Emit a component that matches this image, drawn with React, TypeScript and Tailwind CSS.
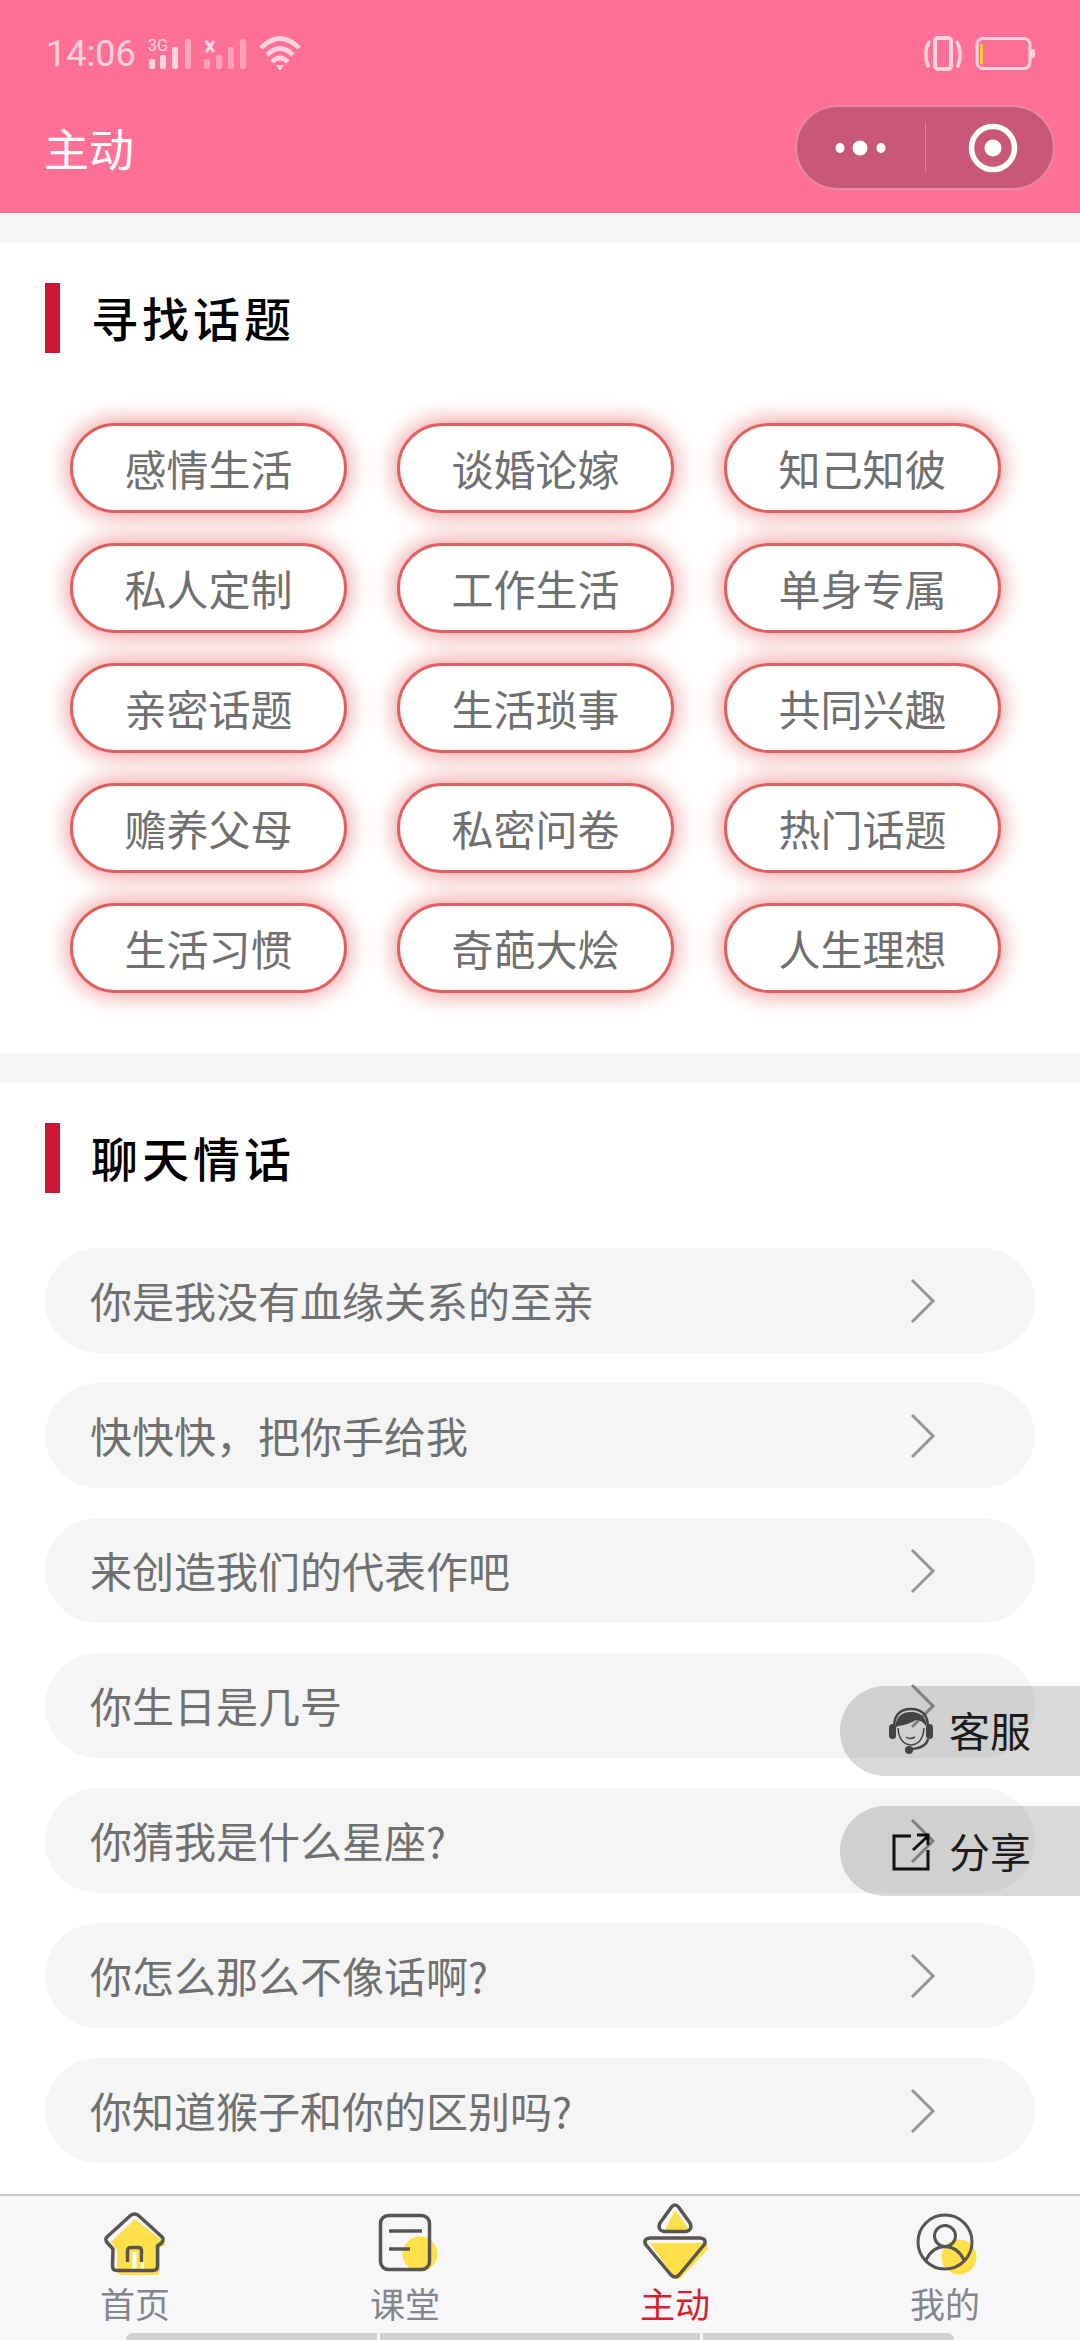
import React from "react";

const topics = ["感情生活","谈婚论嫁","知己知彼","私人定制","工作生活","单身专属","亲密话题","生活琐事","共同兴趣","赡养父母","私密问卷","热门话题","生活习惯","奇葩大烩","人生理想"];
const chats = ["你是我没有血缘关系的至亲","快快快，把你手给我","来创造我们的代表作吧","你生日是几号","你猜我是什么星座?","你怎么那么不像话啊?","你知道猴子和你的区别吗?"];
const ink = "#5a5550";
const yellow = "#ffdf4a";

function StatusLeft() {
  return (
    <svg width="160" height="40" viewBox="146 33 160 40" className="ml-[10px]">
      <text x="148" y="51" fontSize="17" fill="#ffffff" fillOpacity="0.7" fontFamily="Roboto, sans-serif" textLength="20" lengthAdjust="spacingAndGlyphs">3G</text>
      <g fill="#fff" fillOpacity="0.7">
        <rect x="149" y="59" width="6" height="10" rx="2" />
        <rect x="160" y="55" width="6" height="14" rx="2" />
        <rect x="172" y="47" width="6" height="22" rx="2" />
      </g>
      <g fill="#fff" fillOpacity="0.35">
        <rect x="185" y="39" width="6" height="30" rx="2" />
        <rect x="204" y="59" width="6" height="10" rx="2" />
        <rect x="216" y="55" width="6" height="14" rx="2" />
        <rect x="228" y="47" width="6" height="22" rx="2" />
        <rect x="240" y="39" width="6" height="30" rx="2" />
      </g>
      <path d="M206 41 L214 52 M214 41 L206 52" stroke="#fff" strokeOpacity="0.75" strokeWidth="3" />
      <g fill="none" stroke="#fff" strokeOpacity="0.7" strokeWidth="4.5">
        <path d="M261 48 Q280 29 299 48" />
        <path d="M267 55 Q280 42 293 55" />
        <path d="M272 62 Q280 54 288 62" />
      </g>
      <path d="M276 65 L284 65 L280 71 Z" fill="#fff" fillOpacity="0.7" />
    </svg>
  );
}

function StatusRight() {
  return (
    <svg width="120" height="40" viewBox="920 34 120 40" className="mr-[40px]">
      <g fill="none" stroke="#fff" strokeOpacity="0.7" strokeLinecap="round">
        <rect x="935" y="39" width="16" height="31" rx="3" strokeWidth="4" />
        <path d="M929 43 Q923 54 928 67 M957 43 Q963 54 958 67" strokeWidth="3.5" />
        <rect x="977" y="39.5" width="53" height="30" rx="6" strokeWidth="3" />
      </g>
      <rect x="1031" y="50" width="4" height="9" rx="2" fill="#fff" fillOpacity="0.7" />
      <rect x="980" y="45" width="3" height="20" fill="#ffc83d" />
    </svg>
  );
}

function Capsule() {
  return (
    <div className="flex h-[85px] w-[260px] items-center rounded-full border-2 border-[#e58ba4] bg-[#c95878]">
      <svg width="128" height="30" viewBox="0 0 128 30">
        <ellipse cx="43" cy="15" rx="4.5" ry="5" fill="#fff" />
        <ellipse cx="63" cy="15" rx="7.5" ry="7.5" fill="#fff" />
        <ellipse cx="84" cy="15" rx="4.5" ry="5" fill="#fff" />
      </svg>
      <div className="h-[51px] w-px bg-[#e07f9b]" />
      <div className="flex flex-1 items-center justify-center">
        <svg width="52" height="52" viewBox="0 0 52 52" className="ml-[6px]">
          <circle cx="26" cy="26" r="21.5" fill="none" stroke="#fff" strokeWidth="5.5" />
          <circle cx="26" cy="26" r="8.5" fill="#fff" />
        </svg>
      </div>
    </div>
  );
}

function SectionTitle({ text }: { text: string }) {
  return (
    <div className="flex h-[70px] items-center pl-[45px]">
      <div className="h-[70px] w-[15px] bg-[#cb1736]" />
      <div className="ml-[31px] pb-[2px] text-[47px] font-medium leading-[68px] tracking-[4px] text-black">{text}</div>
    </div>
  );
}

function Chevron() {
  return (
    <svg width="28" height="46" viewBox="0 0 28 46" fill="none">
      <path d="M3 2 L24 23 L3 44" stroke="#969696" strokeWidth="3" />
    </svg>
  );
}

function HomeIcon() {
  return (
    <svg width="80" height="80" viewBox="0 0 80 80" fill="none">
      <g transform="translate(0 10)">
        <path d="M40 9 L70 33 Q72 36 65 37 L65 60 Q65 65 60 65 L27 65 Q22 65 22 60 L22 40 L16 32 Z" fill={yellow} />
        <path d="M37.5 52 L37.5 42 L41.5 42 L41.5 60 L37.5 60 Z M46 44 L49 44 L49 60 L46 60 Z" fill="#fff" />
        <path d="M18 39 L12.5 33 Q9 29 13 26 L35.5 5.5 Q39.5 2.5 43.5 5.5 L66 26 Q70 29 66.5 33 L62.5 36 L62.5 56 Q62.5 60.5 58 60.5 L22 60.5 Q17.5 60.5 17.5 56 Z" stroke={ink} strokeWidth="3.5" strokeLinejoin="round" />
        <path d="M32.5 52 L32.5 41 Q32.5 37.5 36 37.5 L43 37.5 Q46.5 37.5 46.5 41 L46.5 52" stroke={ink} strokeWidth="3.5" />
      </g>
    </svg>
  );
}

function ClassIcon() {
  return (
    <svg width="80" height="80" viewBox="0 0 80 80" fill="none">
      <circle cx="55" cy="54" r="17.5" fill={yellow} />
      <rect x="15.5" y="15.5" width="49" height="54" rx="8" stroke={ink} strokeWidth="3.5" />
      <path d="M24 31 L57 31 M24 49 L45 49" stroke={ink} strokeWidth="3.5" />
    </svg>
  );
}

function ActiveIcon() {
  return (
    <svg width="80" height="80" viewBox="0 0 80 80" fill="none">
      <path d="M40 10 L54 29 Q56 33 50 33 L36 33 L30 30 Z" fill={yellow} />
      <path d="M15 43 L72 43 L73 49 L45 79 L40 79 Z" fill={yellow} />
      <path d="M36.5 7 Q40 3 43.5 7 L55 23 Q58 30 51 31.5 L29 31.5 Q22 30 25 23 Z" stroke={ink} strokeWidth="3.5" strokeLinejoin="round" />
      <path d="M15 38 L65 38 Q72.5 39 69 45 L44 75 Q40 79 36 75 L11 45 Q7.5 39 15 38 Z" stroke={ink} strokeWidth="3.5" strokeLinejoin="round" />
    </svg>
  );
}

function MineIcon() {
  return (
    <svg width="80" height="80" viewBox="0 0 80 80" fill="none">
      <circle cx="54" cy="57" r="17.5" fill={yellow} />
      <circle cx="40" cy="42" r="27" stroke={ink} strokeWidth="3" />
      <circle cx="40" cy="36" r="10.5" stroke={ink} strokeWidth="3" />
      <path d="M21 60 Q27 47 40 46.5 Q53 47 59 60" stroke={ink} strokeWidth="3" />
    </svg>
  );
}

function HeadsetIcon() {
  return (
    <svg width="46" height="50" viewBox="0 0 46 50" fill="none">
      <path d="M7 22 Q8 6 23 6 Q38 6 39 22 Q35 14 28 14 Q20 19 10 20 Z" fill="#444" />
      <path d="M6 24 Q5 3 23 3 Q41 3 40 24" stroke="#444" strokeWidth="2.5" />
      <rect x="1" y="18" width="7" height="15" rx="3.5" fill="#444" />
      <rect x="38" y="18" width="7" height="15" rx="3.5" fill="#444" />
      <path d="M10 22 Q11 38 23 39 Q35 38 36 22" stroke="#444" strokeWidth="1.5" />
      <path d="M18 31 Q22 34 27 31" stroke="#444" strokeWidth="1.5" />
      <path d="M40 33 Q38 42 23 43" stroke="#444" strokeWidth="2.5" />
      <circle cx="21" cy="44" r="4" fill="#444" />
    </svg>
  );
}

function ShareIcon() {
  return (
    <svg width="40" height="40" viewBox="0 0 40 40" fill="none">
      <path d="M20 5 L3 5 L3 38 L37 38 L37 19" stroke="#111" strokeWidth="3" />
      <path d="M22 19 L37 5 M26 4 L37 4 L37 14" stroke="#111" strokeWidth="3" />
    </svg>
  );
}

function Tab({ label, active, children }: { label: string; active?: boolean; children: React.ReactNode }) {
  return (
    <div className="flex flex-1 flex-col items-center">
      {children}
      <div className={"text-[35px] leading-[46px] " + (active ? "text-[#d81e2c]" : "text-[#85868b]")}>{label}</div>
    </div>
  );
}

export default function App() {
  return (
    <div className="relative h-[2340px] w-[1080px] overflow-hidden bg-[#f5f5f5]" style={{ fontFamily: '"Noto Sans CJK SC", "Liberation Sans", sans-serif' }}>
      <header className="h-[213px] bg-[#ff7096]">
        <div className="flex h-[105px] items-center justify-between">
          <div className="flex items-center pl-[46px]">
            <span className="pt-[3px] text-[36px] leading-[40px] text-white/70" style={{ fontFamily: "Roboto, sans-serif" }}>14:06</span>
            <StatusLeft />
          </div>
          <StatusRight />
        </div>
        <div className="flex h-[85px] items-center justify-between pl-[44px] pr-[25px]">
          <div className="text-[45px] leading-[60px] text-white">主动</div>
          <Capsule />
        </div>
      </header>

      <section className="mt-[30px] bg-white pb-[60px] pt-[40px]">
        <SectionTitle text="寻找话题" />
        <div className="mt-[70px] grid grid-cols-[277px_277px_277px] gap-x-[50px] gap-y-[30px] pl-[70px]">
          {topics.map((t) => (
            <div key={t} className="flex h-[90px] items-center justify-center rounded-full border-[3px] border-[#e06060] bg-white pb-[2px] text-[42px] text-[#707070] shadow-[0_0_24px_rgba(225,50,50,0.6)]">{t}</div>
          ))}
        </div>
      </section>

      <section className="mt-[30px] h-[1111px] bg-white pt-[40px]">
        <SectionTitle text="聊天情话" />
        <div className="mt-[55px] flex flex-col gap-[30px] px-[45px]">
          {chats.map((c) => (
            <div key={c} className="flex h-[105px] items-center justify-between rounded-full bg-[#f5f5f5] pl-[45px] pr-[98px] text-[42px] text-[#707070]">
              <span className="pb-[2px]">{c}</span>
              <Chevron />
            </div>
          ))}
        </div>
      </section>

      <div className="absolute right-0 top-[1686px] flex h-[90px] w-[240px] items-center rounded-l-[45px] bg-black/15 pl-[48px]">
        <HeadsetIcon />
        <span className="ml-[15px] pb-[2px] text-[41px] text-[#1c1c1c]">客服</span>
      </div>
      <div className="absolute right-0 top-[1806px] flex h-[90px] w-[240px] items-center rounded-l-[45px] bg-black/15 pl-[51px]">
        <ShareIcon />
        <span className="ml-[18px] text-[41px] text-[#1c1c1c]">分享</span>
      </div>

      <nav className="flex h-[146px] flex-col border-t-2 border-[#c8c8ce] bg-[#f7f7f9]">
        <div className="flex flex-1 pt-[4px]">
          <Tab label="首页"><HomeIcon /></Tab>
          <Tab label="课堂"><ClassIcon /></Tab>
          <Tab label="主动" active><ActiveIcon /></Tab>
          <Tab label="我的"><MineIcon /></Tab>
        </div>
        <div className="flex h-[7px] gap-[3px] pl-[126px]">
          <div className="w-[251px] rounded-tl-full bg-[#d0d0d0]" />
          <div className="w-[320px] bg-[#d0d0d0]" />
          <div className="w-[251px] rounded-tr-full bg-[#d0d0d0]" />
        </div>
      </nav>
    </div>
  );
}
